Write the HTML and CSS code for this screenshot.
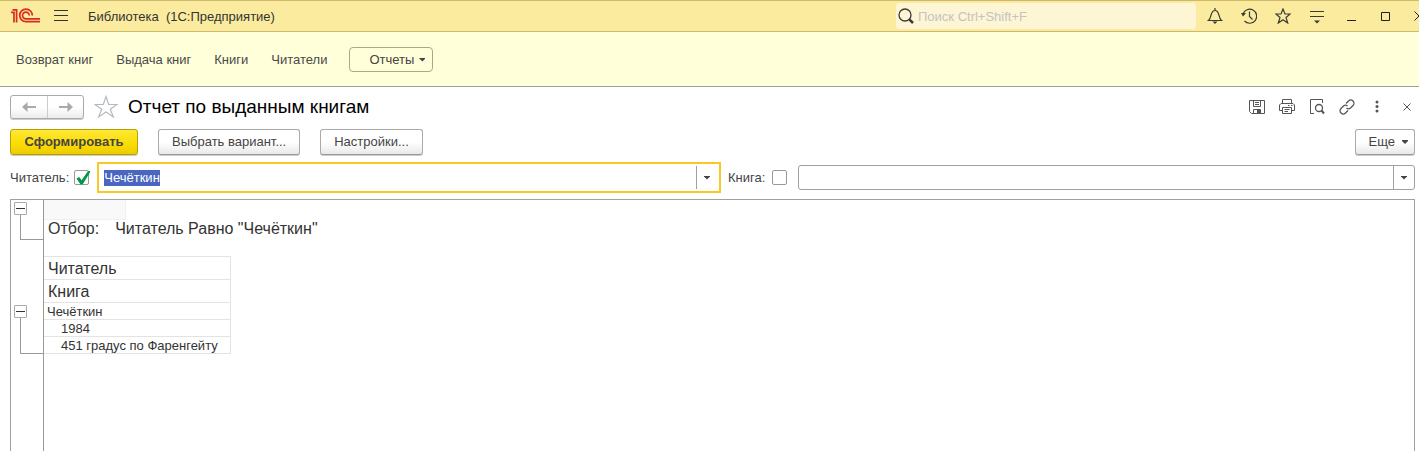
FILE: index.html
```html
<!DOCTYPE html>
<html lang="ru">
<head>
<meta charset="utf-8">
<title>Библиотека (1С:Предприятие)</title>
<link rel="stylesheet" href="styles.css">
</head>
<body>
<header class="titlebar">
  <svg class="logo" width="30" height="16" viewBox="0 0 30 16" fill="none" stroke="#dc2a22" stroke-width="1.7">
    <path d="M0 4.300H3V14.500M1.500 1.900H5.600V14.500"/>
    <path d="M21.300 7.500A6.300 6.300 0 1 0 15 13.700H29"/>
    <path d="M18.300 7.500A3.400 3.400 0 1 0 15 10.900H29"/>
  </svg>
  <button class="menu-btn" aria-label="Меню"><svg width="14" height="12" viewBox="0 0 14 12" stroke="#333" fill="none"><path d="M0 .5H14M0 5.500H14M0 10.500H14"/></svg></button>
  <span class="app-name">Библиотека&nbsp; (1С:Предприятие)</span>
  <label class="search">
    <svg width="16" height="16" viewBox="0 0 16 16" fill="none" stroke="#3a3a3a"><circle cx="7" cy="7" r="6" stroke-width="1.300"/><path d="M11.300 11.300L15 15" stroke-width="2.500"/></svg>
    <input type="search" placeholder="Поиск Ctrl+Shift+F" aria-label="Поиск">
  </label>
  <div class="window-tools">
    <button aria-label="Уведомления"><svg width="16" height="16" viewBox="0 0 16 16" fill="none" stroke="#3a3a3a" stroke-width="1.200"><path d="M8 0V2M1.500 12.500C5 10 3 2.500 8 2.500S11 10 14.500 12.500Z"/><path d="M5.500 13.500H10.500L8 16Z" fill="#3a3a3a" stroke="none"/></svg></button>
    <button aria-label="История"><svg width="16" height="16" viewBox="0 0 16 16" fill="none" stroke="#3a3a3a" stroke-width="1.200"><path d="M2 6A7 7 0 1 1 3.500 13M8.500 3.500V8.500L11.500 11.500"/><path d="M0 5H5L2 8.500Z" fill="#3a3a3a" stroke="none"/></svg></button>
    <button aria-label="Избранное"><svg width="16" height="16" viewBox="0 0 16 16" fill="none" stroke="#3a3a3a" stroke-width="1.200"><path d="M8 1L10 6H15.200L11 9.500L12.700 15L8 11.700L3.300 15L5 9.500L.8 6H6Z"/></svg></button>
    <button aria-label="Настройка"><svg width="16" height="16" viewBox="0 0 16 16" fill="none" stroke="#3a3a3a"><path d="M1 3.500H15M1 8.500H15"/><path d="M5 12.500H11L8 15.500Z" fill="#3a3a3a" stroke="none"/></svg></button>
    <button aria-label="Свернуть"><svg width="16" height="16" viewBox="0 0 16 16" stroke="#222"><path d="M4 12.500H13"/></svg></button>
    <button aria-label="Развернуть"><svg width="16" height="16" viewBox="0 0 16 16" fill="none" stroke="#222"><path d="M4.500 4.500H12.500V12.500H4.500Z"/></svg></button>
    <button aria-label="Закрыть"><svg width="16" height="16" viewBox="0 0 16 16" fill="none" stroke="#222"><path d="M3.500 3.500L12.500 12.500M12.500 3.500L3.500 12.500"/></svg></button>
  </div>
</header>

<nav class="sections">
  <a href="#">Возврат книг</a>
  <a href="#">Выдача книг</a>
  <a href="#">Книги</a>
  <a href="#">Читатели</a>
  <button class="reports">Отчеты <span class="arrow"></span></button>
</nav>

<main class="page">
  <div class="heading">
    <div class="history">
      <button aria-label="Назад"><svg width="14" height="10" viewBox="0 0 14 10"><path d="M0 5L5.500 0V4H14V6H5.500V10Z" fill="#aaa"/></svg></button>
      <button aria-label="Вперед"><svg width="14" height="10" viewBox="0 0 14 10"><path d="M14 5L8.500 0V4H0V6H8.500V10Z" fill="#aaa"/></svg></button>
    </div>
    <button class="fav" aria-label="В избранное"><svg width="24" height="24" viewBox="0 0 24 24" fill="none" stroke="#b4bac0" stroke-width="1.200"><path d="M12 1.500L14.700 9.500H23L16.300 14.200L19.300 22L12 17L4.700 22L7.700 14.200L1 9.500H9.300Z"/></svg></button>
    <h1>Отчет по выданным книгам</h1>
    <div class="page-tools">
      <button aria-label="Сохранить"><svg width="16" height="16" viewBox="0 0 16 16" fill="none" stroke="#555"><path d="M.5 1.500H15.500V14.500H2.500L.5 12.500V1.500ZM4.500 1.500V7.500H11.500V1.500M6 3.500H10M6 5.500H10M4.500 14V10.500H11.500V14"/><path d="M8 11H11V14H8Z" fill="#555" stroke="none"/></svg></button>
      <button aria-label="Печать"><svg width="16" height="16" viewBox="0 0 16 16" fill="none" stroke="#555"><path d="M3.500 4.500V.5H12.500V4.500M3.500 11.500H.5V6L2 4.500H14L15.500 6V11.500H12.500M3.500 8.500H12.500V14.500H3.500ZM5.500 10.500H10.500M5.500 12.500H9M9 6.500H10.500M12 6.500H13.500"/></svg></button>
      <button aria-label="Просмотр"><svg width="16" height="16" viewBox="0 0 16 16" fill="none" stroke="#555"><path d="M5 14.500H1.500V.5H13.500V4"/><circle cx="10" cy="9" r="3.500" stroke-width="1.300"/><path d="M12.500 11.500L15 14.500" stroke-width="2"/></svg></button>
      <button aria-label="Ссылка"><svg width="16" height="16" viewBox="0 0 16 16" fill="none" stroke="#555" stroke-width="1.300"><path d="M7 4.500L9.500 2A3 3 0 0 1 14 6.500L11.500 9A3 3 0 0 1 7.500 9M9 11.500L6.500 14A3 3 0 0 1 2 9.500L4.500 7A3 3 0 0 1 8.500 7"/></svg></button>
      <button aria-label="Действия"><svg width="16" height="16" viewBox="0 0 16 16" fill="#555"><circle cx="8" cy="3" r="1.500"/><circle cx="8" cy="7.500" r="1.500"/><circle cx="8" cy="12" r="1.500"/></svg></button>
      <button aria-label="Закрыть отчет"><svg width="16" height="16" viewBox="0 0 16 16" stroke="#555"><path d="M4.500 4.500L11.500 11.500M11.500 4.500L4.500 11.500"/></svg></button>
    </div>
  </div>

  <div class="commands">
    <button class="btn primary">Сформировать</button>
    <button class="btn">Выбрать вариант...</button>
    <button class="btn">Настройки...</button>
    <button class="btn more">Еще <span class="arrow"></span></button>
  </div>

  <div class="filters">
    <div class="filter">
      <label for="use-reader">Читатель:</label>
      <input type="checkbox" id="use-reader" checked>
      <div class="combo active">
        <input type="text" id="reader" value="Чечёткин" aria-label="Читатель" autofocus>
        <button aria-label="Выбрать читателя"><span class="arrow"></span></button>
      </div>
    </div>
    <div class="filter">
      <label for="use-book">Книга:</label>
      <input type="checkbox" id="use-book">
      <div class="combo">
        <input type="text" aria-label="Книга">
        <button aria-label="Выбрать книгу"><span class="arrow"></span></button>
      </div>
    </div>
  </div>

  <section class="sheet">
    <div class="band">
      <div class="gutter"><button class="toggle" aria-label="Свернуть отбор"></button><i class="bracket"></i></div>
      <div class="params">
        <div class="blank"></div>
        <p><span>Отбор:</span><span>Читатель Равно "Чечёткин"</span></p>
      </div>
    </div>
    <div class="band spacer"><div class="gutter"></div></div>
    <div class="band">
      <div class="gutter group"><button class="toggle" aria-label="Свернуть группу"></button><i class="bracket"></i></div>
      <table class="report">
        <thead>
          <tr><th>Читатель</th></tr>
          <tr><th>Книга</th></tr>
        </thead>
        <tbody>
          <tr><td class="parent">Чечёткин</td></tr>
          <tr><td>1984</td></tr>
          <tr><td>451 градус по Фаренгейту</td></tr>
        </tbody>
      </table>
    </div>
    <div class="band rest"><div class="gutter"></div></div>
  </section>
</main>
<script src="script.js"></script>
</body>
</html>
```
FILE: styles.css
```css
* { box-sizing: border-box; }
body {
  margin: 0;
  height: 100vh;
  display: flex;
  flex-direction: column;
  overflow: hidden;
  background: #fff;
  color: #444;
  font: 13px/16px "Liberation Sans", Arial, sans-serif;
}
button, input { font: inherit; color: inherit; }
button {
  display: flex;
  align-items: center;
  justify-content: center;
  padding: 0;
  border: 0;
  background: none;
}
svg { display: block; flex: none; }
.arrow {
  flex: none;
  width: 6px;
  height: 4px;
  background: #444;
  clip-path: polygon(0 0, 100% 0, 100% 25%, 50% 100%, 0 25%);
}

.titlebar {
  flex: none;
  display: flex;
  align-items: center;
  height: 32px;
  padding-left: 11px;
  background: #fbeb9e;
  border-top: 1px solid #cdb96b;
  border-bottom: 1px solid #cdb96b;
}
.menu-btn { margin: 0 20px 0 13px; }
.app-name { flex: 1; padding-top: 2px; color: #333; white-space: nowrap; }
.search {
  display: flex;
  align-items: center;
  gap: 4px;
  width: 300px;
  height: 26px;
  padding-left: 2px;
  background: #fdf5d4;
  border-radius: 3px;
}
.search input {
  flex: 1;
  min-width: 0;
  padding: 2px 0 0;
  border: 0;
  outline: 0;
  background: none;
}
.search input::placeholder { color: #c3c3c3; opacity: 1; }
.window-tools { display: flex; margin: 0 -17px 0 2px; }
.window-tools button { width: 34px; height: 30px; }

.sections {
  flex: none;
  display: flex;
  align-items: center;
  gap: 23px;
  height: 55px;
  padding: 1px 0 0 16px;
  background: #ffffd9;
  border-bottom: 1px solid #a0a0a0;
}
.sections a { padding-top: 1px; color: #4a4a4a; text-decoration: none; }
.reports {
  gap: 5px;
  height: 25px;
  margin-left: -1px;
  padding: 0 7px 0 19px;
  border: 1px solid #a9a98f;
  border-radius: 4px;
}

.page {
  flex: 1;
  min-height: 0;
  display: flex;
  flex-direction: column;
  padding: 8px 4px 0 10px;
}
.heading { display: flex; align-items: center; height: 24px; }
.history {
  display: flex;
  border: 1px solid #aaa;
  border-radius: 3px;
  background: linear-gradient(#fff 50%, #ececec);
  box-shadow: 0 1px 0 #ccc;
}
.history button { width: 36px; height: 22px; }
.history button + button { border-left: 1px solid #ccc; }
.fav { margin: 0 10px 0 10px; }
h1 {
  flex: 1;
  margin: 0;
  color: #000;
  font-size: 19px;
  line-height: 24px;
  font-weight: 400;
}
.page-tools { display: flex; margin-right: -7px; }
.page-tools button { width: 30px; height: 24px; }

.commands { display: flex; gap: 20px; margin-top: 10px; }
.btn {
  height: 26px;
  padding: 0 13px;
  border: 1px solid #aaa;
  border-bottom-color: #999;
  border-radius: 3px;
  background: linear-gradient(#fff 50%, #e9e9e9);
  box-shadow: 0 1px 0 #ccc;
}
.primary {
  min-width: 128px;
  font-weight: 700;
  border-color: #b8a000;
  background: linear-gradient(#ffe838, #fadc00 60%, #eccb00);
}
.more { gap: 7px; margin-left: auto; padding-right: 6px; }

.filters { display: flex; gap: 7px; margin-top: 7px; }
.filter { flex: 711 1 0; display: flex; align-items: center; }
.filter + .filter { flex-grow: 687; }
.filter > input {
  flex: none;
  appearance: none;
  display: grid;
  place-items: center;
  width: 15px;
  height: 15px;
  margin: 0 8px 0 5px;
  border: 1px solid #999;
  border-radius: 2px;
  background: #fff;
}
.filter + .filter > input { margin: 0 11px 0 7px; }
.filter > input:checked::after {
  content: "";
  width: 15px;
  height: 15px;
  background: #009a44;
  clip-path: polygon(8% 50%, 26% 40%, 42% 62%, 88% -4%, 106% -4%, 50% 88%, 34% 88%);
}
.combo {
  flex: 1;
  display: flex;
  height: 25px;
  border: 1px solid #a0a0a0;
  border-radius: 3px;
}
.combo input {
  flex: 1;
  min-width: 0;
  padding: 0 5px;
  border: 0;
  outline: 0;
  background: none;
}
.combo input::selection { background: #4a66c0; color: #fff; }
.combo button { width: 21px; border-left: 1px solid #a0a0a0; }
.combo.active {
  height: 31px;
  padding: 2px 2px 2px 0;
  border: 2px solid #f9c822;
  border-radius: 0;
}

.sheet {
  flex: 1;
  display: flex;
  flex-direction: column;
  margin-top: 6px;
  border: 1px solid #a0a0a0;
  border-bottom: 0;
  color: #333;
}
.band { display: flex; }
.gutter {
  flex: none;
  display: flex;
  flex-direction: column;
  width: 33px;
  padding: 2px 0 0 3px;
  border-right: 1px solid #999;
}
.toggle {
  flex: none;
  width: 13px;
  height: 13px;
  border: 1px solid #aaa;
  border-radius: 1px;
}
.toggle::before {
  content: "";
  width: 9px;
  height: 1px;
  background: #333;
}
.bracket {
  flex: 1;
  margin-left: 6px;
  border: solid #999;
  border-width: 0 0 1px 1px;
}
.group { padding-top: 49px; }
.params { height: 40px; }
.blank {
  width: 82px;
  height: 20px;
  background: #f9f9f9;
  border: solid #f0f0f0;
  border-width: 0 1px 1px 0;
}
.params p {
  display: flex;
  gap: 16px;
  margin: 0;
  padding-left: 4px;
  font-size: 16px;
  line-height: 18px;
}
.spacer { height: 16px; }
.rest { flex: 1; }
.report {
  width: 187px;
  border-collapse: separate;
  border-spacing: 0;
  border-top: 1px solid #e3e3e3;
  border-right: 1px solid #e3e3e3;
}
.report th, .report td {
  padding: 1px 0 0 17px;
  border-bottom: 1px solid #e3e3e3;
  line-height: 15px;
  font-weight: 400;
  text-align: left;
  white-space: nowrap;
}
.report th {
  padding: 2px 0 0 4px;
  font-size: 16px;
  line-height: 20px;
}
.report .parent { padding-left: 3px; }
```
FILE: script.js
```js
const reader = document.getElementById("reader");
reader.focus();
reader.select();
```
